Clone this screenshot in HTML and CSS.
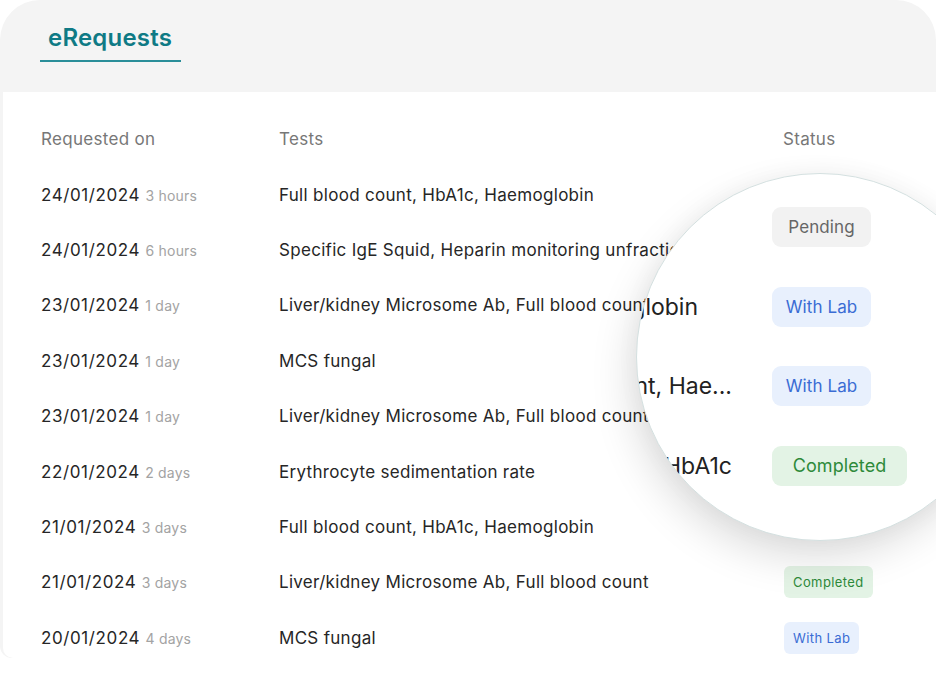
FILE: index.html
```html
<!DOCTYPE html>
<html lang="en">
<head>
  <meta charset="UTF-8"/>
  <meta name="viewport" content="width=device-width, initial-scale=1.0"/>
  <title>eRequests</title>
  <link rel="stylesheet" href="styles.css">
</head>
<body>
  <div class="frame">
    <!-- Tabs -->
    <div class="tabs">
      <div class="tab active">eRequests</div>
    </div>

    <div class="panel">
      <!-- Requests table -->
      <div class="table">
        <div class="row head">
          <div>Requested on</div>
          <div>Tests</div>
          <div>Status</div>
        </div>
        <div class="row">
          <div class="date">24/01/2024 <span class="ago">3 hours</span></div>
          <div class="tests">Full blood count, HbA1c, Haemoglobin</div>
          <div><span class="badge pending">Pending</span></div>
        </div>
        <div class="row">
          <div class="date">24/01/2024 <span class="ago">6 hours</span></div>
          <div class="tests">Specific IgE Squid, Heparin monitoring unfractionated</div>
          <div><span class="badge lab">With Lab</span></div>
        </div>
        <div class="row">
          <div class="date">23/01/2024 <span class="ago">1 day</span></div>
          <div class="tests">Liver/kidney Microsome Ab, Full blood count, Haemoglobin</div>
          <div><span class="badge lab">With Lab</span></div>
        </div>
        <div class="row">
          <div class="date">23/01/2024 <span class="ago">1 day</span></div>
          <div class="tests">MCS fungal</div>
          <div><span class="badge lab">With Lab</span></div>
        </div>
        <div class="row">
          <div class="date">23/01/2024 <span class="ago">1 day</span></div>
          <div class="tests">Liver/kidney Microsome Ab, Full blood count</div>
          <div><span class="badge done">Completed</span></div>
        </div>
        <div class="row">
          <div class="date">22/01/2024 <span class="ago">2 days</span></div>
          <div class="tests">Erythrocyte sedimentation rate</div>
          <div><span class="badge done">Completed</span></div>
        </div>
        <div class="row">
          <div class="date">21/01/2024 <span class="ago">3 days</span></div>
          <div class="tests">Full blood count, HbA1c, Haemoglobin</div>
          <div></div>
        </div>
        <div class="row">
          <div class="date">21/01/2024 <span class="ago">3 days</span></div>
          <div class="tests">Liver/kidney Microsome Ab, Full blood count</div>
          <div><span class="badge done">Completed</span></div>
        </div>
        <div class="row">
          <div class="date">20/01/2024 <span class="ago">4 days</span></div>
          <div class="tests">MCS fungal</div>
          <div><span class="badge lab">With Lab</span></div>
        </div>
      </div>

      <!-- Magnifier over the status column -->
      <div class="lens">
        <div class="lens-row">
          <div class="lens-tests"></div>
          <span class="badge big pending">Pending</span>
        </div>
        <div class="lens-row">
          <div class="lens-tests short"><span>Full blood count, Haemoglobin</span></div>
          <span class="badge big lab">With Lab</span>
        </div>
        <div class="lens-row">
          <div class="lens-tests"><span>Full blood count, Hae...</span></div>
          <span class="badge big lab">With Lab</span>
        </div>
        <div class="lens-row">
          <div class="lens-tests"><span>Full blood count, HbA1c</span></div>
          <span class="badge big done wide">Completed</span>
        </div>
      </div>
    </div>
  </div>
</body>
</html>
```

FILE: styles.css
```css
:root {
  --teal:       #0f7a85;
  --teal-line:  #2a8e99;
  --frame:      #f4f4f4;
  --text:       #262626;
  --muted:      #777;
  --faint:      #a3a3a3;
}
* { box-sizing: border-box; margin:0; padding:0; }
body {
  font-family: Inter, "Noto Sans", sans-serif;
  background: #fff;
  color: var(--text);
  overflow: hidden;
}

.frame {
  width: 100%;
  height: 658px;
  background: var(--frame);
  border-radius: 40px 40px 0 12px;
  padding-left: 3px;
  display: flex;
  flex-direction: column;
  overflow: hidden;
}

.tabs {
  flex-shrink: 0;
  height: 92px;
  padding: 0 0 30px 37px;
  display: flex;
  align-items: flex-end;
}
.tab {
  padding: 0 9px 8px 8px;
  font-size: 24px;
  font-weight: 600;
  color: var(--teal);
  letter-spacing: 0.2px;
}
.tab.active { border-bottom: 2px solid var(--teal-line); }

.panel {
  flex: 1;
  min-height: 0;
  background: #fff;
  position: relative;
  padding-top: 19.5px;
  border-bottom-left-radius: 10px;
}

.table { padding-left: 38px; }
.row {
  display: grid;
  grid-template-columns: 238px 504px 1fr;
  align-items: center;
  height: 55.4px;
  font-size: 17px;
  letter-spacing: 0.3px;
}
.row.head { color: var(--muted); }
.date {
  white-space: nowrap;
  letter-spacing: 0.6px;
}
.ago {
  font-size: 14px;
  letter-spacing: 0.2px;
  color: var(--faint);
}
.tests {
  white-space: nowrap;
  overflow: hidden;
  text-overflow: ellipsis;
  padding-right: 20px;
}

.badge {
  display: inline-flex;
  align-items: center;
  height: 32px;
  padding: 0 9px;
  border-radius: 6px;
  font-size: 13px;
  letter-spacing: 0.4px;
  margin-left: 1px;
}
.badge.pending { background: #f2f2f2; color: #666; }
.badge.lab     { background: #e8f0fd; color: #3a6cd4; }
.badge.done    { background: #e3f3e5; color: #2e8a3a; }

.badge.big {
  height: 40px;
  min-width: 99px;
  justify-content: center;
  padding: 0 12px;
  border-radius: 9px;
  font-size: 17px;
  letter-spacing: 0.1px;
  margin-left: 0;
}
.badge.big.wide {
  min-width: 135px;
  font-size: 18px;
}

.lens {
  position: absolute;
  left: 633px;
  top: 81px;
  width: 368px;
  height: 368px;
  border-radius: 50%;
  border: 1.5px solid #d4e0e0;
  background: #fff;
  overflow: hidden;
  padding-top: 13.5px;
  box-shadow: -6px 18px 40px rgba(0,0,0,0.13), 0 0 24px rgba(0,0,0,0.04);
  z-index: 2;
}
.lens-row {
  display: flex;
  align-items: center;
  gap: 40px;
  height: 79.5px;
}
.lens-tests {
  width: 95px;
  flex-shrink: 0;
  display: flex;
  justify-content: flex-end;
  white-space: nowrap;
  font-size: 23px;
  color: #222;
}
.lens-tests.short { padding-right: 34px; }
```
